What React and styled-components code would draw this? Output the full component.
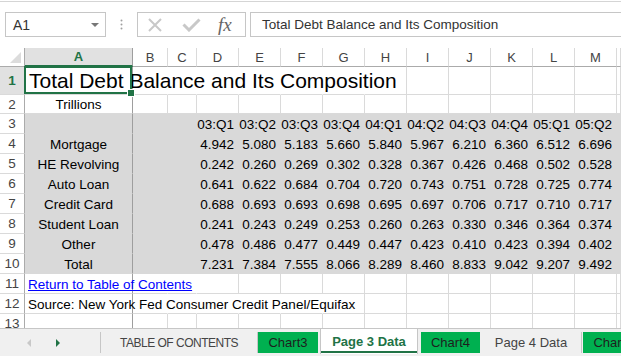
import styled, { createGlobalStyle, css } from 'styled-components';

const GlobalStyle = createGlobalStyle`
  html, body {
    margin: 0;
    padding: 0;
    background: #fff;
  }
  body {
    font-family: "Liberation Sans", Arial, sans-serif;
    overflow: hidden;
  }
  * {
    box-sizing: border-box;
  }
`;

const GREEN = '#217346';
const GRID = '#dadada';
const FILL = '#d9d9d9';

const Window = styled.div`
  width: 621px;
  height: 356px;
  display: flex;
  flex-direction: column;
  overflow: hidden;
  background: #fff;
`;

/* ---------- formula bar ---------- */

const FormulaBar = styled.div`
  margin-top: 1px;
  height: 47px;
  flex-shrink: 0;
  border-top: 1px solid #d5d5d5;
  display: flex;
  align-items: flex-start;
  padding: 10px 0 0 5px;
`;

const NameBox = styled.div`
  width: 101px;
  height: 25px;
  border: 1px solid #c6c6c6;
  display: flex;
  align-items: center;
  justify-content: space-between;
  padding: 0 6px 0 7px;
  font-size: 14px;
  color: #333;
`;

const DropCaret = styled.span`
  width: 0;
  height: 0;
  border-left: 4px solid transparent;
  border-right: 4px solid transparent;
  border-top: 4px solid #777;
`;

const Grip = styled.div`
  width: 31px;
  height: 25px;
  display: flex;
  align-items: center;
  justify-content: center;
`;

const ButtonGroup = styled.div`
  width: 109px;
  height: 25px;
  border: 1px solid #c6c6c6;
  display: flex;
  align-items: center;
  padding-left: 9px;
  gap: 19px;
`;

const FxLabel = styled.span`
  font-family: "Liberation Serif", "Times New Roman", serif;
  font-style: italic;
  font-size: 19px;
  color: #666;
  margin-left: -2px;
  line-height: 1;
`;

const FormulaInput = styled.div`
  flex: 1;
  height: 25px;
  margin-left: 4px;
  border: 1px solid #c6c6c6;
  border-right: none;
  display: flex;
  align-items: center;
  padding-left: 11px;
  font-size: 13.5px;
  color: #333;
  white-space: nowrap;
`;

/* ---------- sheet ---------- */

const Sheet = styled.div`
  height: 280px;
  flex-shrink: 0;
  overflow: hidden;
  display: grid;
  grid-template-columns: 25px 108px 35px 29px repeat(10, 42px) 1fr;
  grid-template-rows: 19px 28px 19px;
  grid-auto-rows: 20px;
  align-content: start;
`;

const Corner = styled.div`
  position: relative;
  border-right: 1px solid #ababab;
  border-bottom: 1px solid #ababab;
  &::after {
    content: '';
    position: absolute;
    right: 3px;
    bottom: 3px;
    width: 0;
    height: 0;
    border-left: 11px solid transparent;
    border-bottom: 11px solid #dcdcdc;
  }
`;

const ColHead = styled.div`
  display: flex;
  align-items: center;
  justify-content: center;
  font-size: 13px;
  color: ${(p) => (p.$active ? GREEN : '#444')};
  font-weight: ${(p) => (p.$active ? 'bold' : 'normal')};
  background: ${(p) => (p.$active ? '#e1e1e1' : '#fff')};
  border-right: 1px solid ${(p) => (p.$freeze ? '#9e9e9e' : GRID)};
  border-bottom: ${(p) => (p.$active ? `2px solid ${GREEN}` : '1px solid #ababab')};
`;

const RowHead = styled.div`
  display: flex;
  align-items: center;
  justify-content: center;
  font-size: 13.5px;
  color: ${(p) => (p.$active ? GREEN : '#444')};
  font-weight: ${(p) => (p.$active ? 'bold' : 'normal')};
  background: ${(p) => (p.$active ? '#e1e1e1' : '#fff')};
  border-right: 1px solid #ababab;
  border-bottom: 1px solid ${GRID};
`;

const rightColor = (p) => {
  if (p.$freeze) return '#9e9e9e';
  if (p.$open || p.$fill) return 'transparent';
  return GRID;
};

const Cell = styled.div`
  display: flex;
  align-items: flex-end;
  justify-content: ${(p) =>
    p.$align === 'right' ? 'flex-end' : p.$align === 'center' ? 'center' : 'flex-start'};
  padding: 0 ${(p) => (p.$align === 'right' ? '4px' : '0')} 0
    ${(p) => (p.$align === 'left' ? '3px' : '0')};
  background: ${(p) => (p.$fill ? FILL : 'transparent')};
  border-right: 1px solid ${rightColor};
  border-bottom: 1px solid ${(p) => (p.$fill ? 'transparent' : GRID)};
  font-size: 13.5px;
  line-height: 16px;
  color: ${(p) => (p.$link ? '#0000ff' : '#000')};
  text-decoration: ${(p) => (p.$link ? 'underline' : 'none')};
  white-space: nowrap;
  min-width: 0;
`;

const TitleCell = styled(Cell)`
  position: relative;
  z-index: 1;
  font-size: 21px;
  line-height: 24px;
  padding-left: 4px;
  padding-bottom: 1px;
  &::after {
    content: '';
    position: absolute;
    top: -1px;
    left: -1px;
    right: 0;
    bottom: 0;
    border: 2px solid ${GREEN};
  }
  &::before {
    content: '';
    position: absolute;
    right: -3px;
    bottom: -3px;
    width: 6px;
    height: 6px;
    background: ${GREEN};
    border: 1px solid #fff;
    z-index: 2;
  }
`;

/* ---------- sheet tabs ---------- */

const TabBar = styled.div`
  height: 28px;
  flex-shrink: 0;
  display: flex;
  align-items: flex-start;
  border-top: 1px solid #c6c6c6;
  background: #f0f0f0;
  overflow: hidden;
`;

const Nav = styled.div`
  width: 101px;
  height: 21px;
  margin-top: 3px;
  flex-shrink: 0;
  border-right: 1px solid #c6c6c6;
  display: flex;
  align-items: center;
  padding-left: 27px;
  gap: 25px;
`;

const Arrow = styled.span`
  width: 0;
  height: 0;
  border-top: 4px solid transparent;
  border-bottom: 4px solid transparent;
  ${(p) =>
    p.$dir === 'left'
      ? css`border-right: 4px solid ${p.$color};`
      : css`border-left: 4px solid ${p.$color};`}
`;

const tabVariants = {
  plain: css`
    height: 21px;
    margin-top: 3px;
    color: #444;
  `,
  green: css`
    height: 21px;
    margin-top: 3px;
    background: #00b050;
    color: #1e1e1e;
  `,
  active: css`
    position: relative;
    height: 26px;
    margin-top: -1px;
    background: #fff;
    border: 1px solid #c6c6c6;
    border-bottom: none;
    color: ${GREEN};
    font-weight: bold;
    &::after {
      content: '';
      position: absolute;
      left: 0;
      right: 0;
      bottom: 1px;
      height: 2px;
      background: ${GREEN};
    }
  `,
};

const Tab = styled.div`
  flex-shrink: 0;
  width: ${(p) => p.$w}px;
  margin-left: ${(p) => p.$ml || 0}px;
  display: flex;
  align-items: center;
  justify-content: center;
  font-size: 13px;
  white-space: nowrap;
  border-right: ${(p) => (p.$sep ? '1px solid #c6c6c6' : 'none')};
  ${(p) => tabVariants[p.$variant || 'plain']}
`;

const CapsLabel = styled.span`
  font-size: 12px;
  letter-spacing: -0.5px;
`;

/* ---------- data ---------- */

const quarters = ['03:Q1', '03:Q2', '03:Q3', '03:Q4', '04:Q1', '04:Q2', '04:Q3', '04:Q4', '05:Q1', '05:Q2'];

const series = [
  ['Mortgage', ['4.942', '5.080', '5.183', '5.660', '5.840', '5.967', '6.210', '6.360', '6.512', '6.696']],
  ['HE Revolving', ['0.242', '0.260', '0.269', '0.302', '0.328', '0.367', '0.426', '0.468', '0.502', '0.528']],
  ['Auto Loan', ['0.641', '0.622', '0.684', '0.704', '0.720', '0.743', '0.751', '0.728', '0.725', '0.774']],
  ['Credit Card', ['0.688', '0.693', '0.693', '0.698', '0.695', '0.697', '0.706', '0.717', '0.710', '0.717']],
  ['Student Loan', ['0.241', '0.243', '0.249', '0.253', '0.260', '0.263', '0.330', '0.346', '0.364', '0.374']],
  ['Other', ['0.478', '0.486', '0.477', '0.449', '0.447', '0.423', '0.410', '0.423', '0.394', '0.402']],
  ['Total', ['7.231', '7.384', '7.555', '8.066', '8.289', '8.460', '8.833', '9.042', '9.207', '9.492']],
];

const letters = ['B', 'C', 'D', 'E', 'F', 'G', 'H', 'I', 'J', 'K', 'L', 'M', ''];

// cells B..N of a plain row; the first `open` ones hide their right gridline (text spills over them)
const blanks = (row, open = 0) =>
  letters.map((l, i) => <Cell key={`${row}-${i}`} $open={i < open} />);

const filledRow = (row, label, values) => [
  <RowHead key={`h${row}`}>{row}</RowHead>,
  <Cell key={`a${row}`} $fill $freeze $align="center">{label}</Cell>,
  <Cell key={`b${row}`} $fill />,
  <Cell key={`c${row}`} $fill />,
  ...values.map((v, i) => (
    <Cell key={`${row}-${i}`} $fill $align="right">{v}</Cell>
  )),
  <Cell key={`n${row}`} $fill />,
];

const CrossIcon = () => (
  <svg width="16" height="16" viewBox="0 0 16 16">
    <path d="M2 2 L14 14 M14 2 L2 14" stroke="#c8c8c8" strokeWidth="2" fill="none" />
  </svg>
);

const CheckIcon = () => (
  <svg width="19" height="14" viewBox="0 0 19 14">
    <path d="M1.5 6.5 L7 12 L17.5 1.5" stroke="#c8c8c8" strokeWidth="3" fill="none" />
  </svg>
);

const GripIcon = () => (
  <svg width="3" height="11" viewBox="0 0 3 11">
    <circle cx="1.5" cy="1.5" r="1" fill="#a0a0a0" />
    <circle cx="1.5" cy="5.5" r="1" fill="#a0a0a0" />
    <circle cx="1.5" cy="9.5" r="1" fill="#a0a0a0" />
  </svg>
);

const App = () => {
  return (
    <Window>
      <GlobalStyle />
      <FormulaBar>
        <NameBox>
          A1
          <DropCaret />
        </NameBox>
        <Grip>
          <GripIcon />
        </Grip>
        <ButtonGroup>
          <CrossIcon />
          <CheckIcon />
          <FxLabel>fx</FxLabel>
        </ButtonGroup>
        <FormulaInput>Total Debt Balance and Its Composition</FormulaInput>
      </FormulaBar>

      <Sheet>
        <Corner />
        <ColHead $active $freeze>A</ColHead>
        {letters.map((l, i) => (
          <ColHead key={`col${i}`}>{l}</ColHead>
        ))}

        <RowHead $active>1</RowHead>
        <TitleCell $freeze $align="left">Total Debt Balance and Its Composition</TitleCell>
        {blanks(1, 6)}

        <RowHead>2</RowHead>
        <Cell $freeze $align="center">Trillions</Cell>
        {blanks(2)}

        {filledRow(3, '', quarters)}
        {series.map(([label, values], i) => filledRow(i + 4, label, values))}

        <RowHead>11</RowHead>
        <Cell $freeze $align="left" $link>Return to Table of Contents</Cell>
        {blanks(11, 2)}

        <RowHead>12</RowHead>
        <Cell $freeze $align="left">Source: New York Fed Consumer Credit Panel/Equifax</Cell>
        {blanks(12, 5)}

        <RowHead>13</RowHead>
        <Cell $freeze />
        {blanks(13)}
      </Sheet>

      <TabBar>
        <Nav>
          <Arrow $dir="left" $color="#c8c8c8" />
          <Arrow $dir="right" $color={GREEN} />
        </Nav>
        <Tab $w={157} $sep>
          <CapsLabel>TABLE OF CONTENTS</CapsLabel>
        </Tab>
        <Tab $w={60} $variant="green">Chart3</Tab>
        <Tab $w={98} $ml={2} $variant="active">Page 3 Data</Tab>
        <Tab $w={59} $ml={3} $variant="green">Chart4</Tab>
        <Tab $w={101} $ml={1} $sep>Page 4 Data</Tab>
        <Tab $w={60} $ml={1} $variant="green">Chart5</Tab>
      </TabBar>
    </Window>
  );
};

export default App;
